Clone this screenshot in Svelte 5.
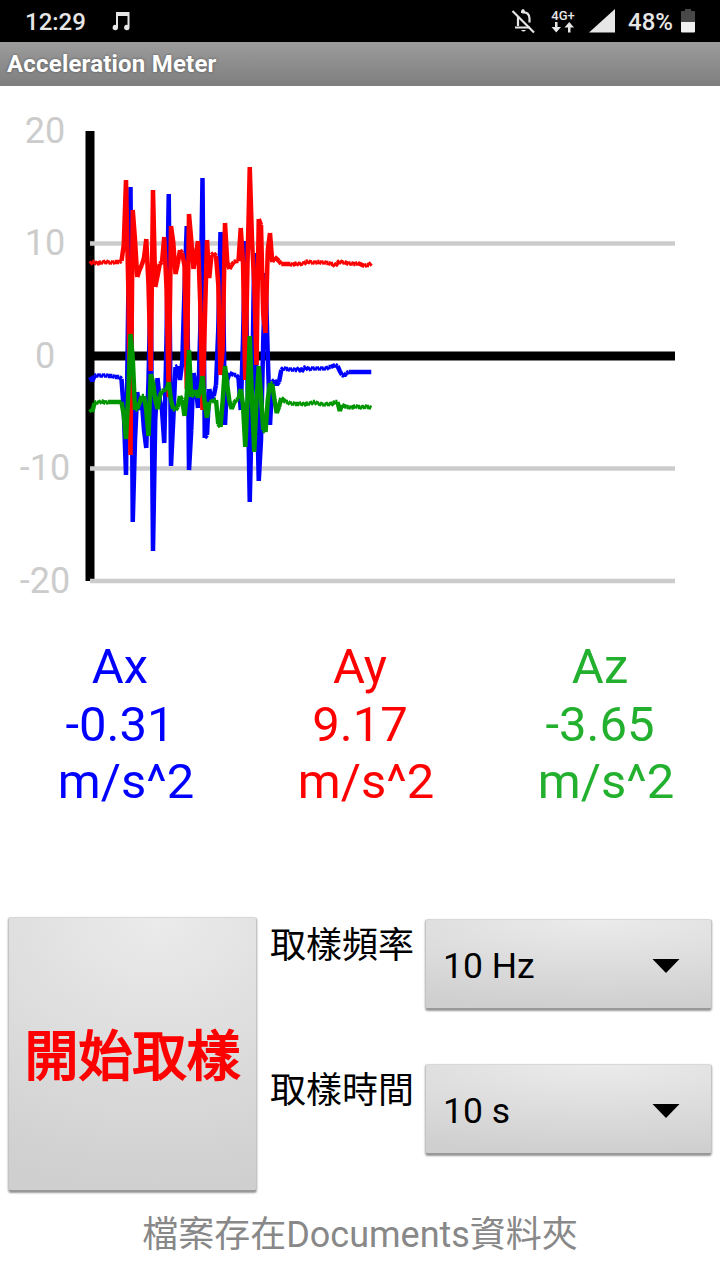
<script>
	// trace heights in plot pixels, one sample every 2.25px
	const traces = [
		{
			color: "#00f",
			samples: [
				377, 381, 376, 375, 376, 375, 376, 375, 376, 376, 376, 377, 377, 377, 379, 410,
				475, 300, 187, 522, 440, 392, 410, 400, 430, 448, 380, 284, 551, 420, 378, 400,
				410, 443, 340, 194, 466, 420, 367, 366, 380, 362, 290, 226, 470, 430, 373, 385,
				408, 330, 178, 438, 435, 389, 399, 396, 385, 330, 232, 260, 425, 380, 373, 374,
				375, 375, 378, 410, 340, 241, 380, 502, 400, 253, 380, 481, 440, 340, 273, 355,
				425, 382, 380, 385, 382, 370, 368, 369, 369, 370, 369, 370, 370, 368, 372, 368,
				367, 370, 368, 369, 368, 369, 368, 369, 368, 369, 367, 367, 366, 365, 366, 371,
				375, 376, 373, 372, 372, 372, 372, 372, 372, 372, 372, 372, 372, 372
			]
		},
		{
			color: "#f00",
			samples: [
				264, 262, 262, 264, 263, 262, 263, 261, 263, 262, 263, 262, 262, 262, 261, 245,
				180, 286, 455, 210, 240, 277, 270, 265, 258, 239, 285, 371, 190, 287, 276, 264,
				262, 237, 288, 397, 226, 242, 274, 264, 250, 253, 266, 389, 214, 240, 269, 255,
				241, 304, 410, 325, 240, 278, 255, 253, 256, 284, 375, 347, 223, 262, 269, 265,
				262, 261, 261, 228, 262, 380, 265, 167, 240, 284, 365, 219, 225, 316, 333, 250,
				233, 262, 257, 259, 261, 264, 264, 264, 264, 264, 265, 264, 263, 265, 263, 264,
				262, 261, 263, 262, 263, 262, 262, 263, 262, 263, 263, 264, 264, 266, 263, 261,
				263, 262, 263, 264, 263, 264, 264, 263, 264, 265, 266, 265, 265, 263
			]
		},
		{
			color: "#009600",
			samples: [
				409, 412, 403, 402, 403, 401, 402, 403, 402, 402, 402, 402, 402, 402, 402, 415,
				439, 395, 334, 358, 410, 409, 403, 396, 396, 410, 436, 374, 382, 400, 409, 396,
				391, 390, 390, 382, 400, 409, 410, 407, 396, 400, 416, 395, 350, 397, 394, 390,
				398, 390, 376, 404, 418, 402, 402, 400, 400, 424, 427, 400, 366, 385, 402, 409,
				403, 400, 399, 389, 405, 447, 400, 336, 400, 452, 400, 366, 395, 430, 432, 400,
				383, 384, 400, 413, 407, 398, 400, 402, 402, 404, 403, 404, 404, 404, 403, 405,
				404, 403, 404, 402, 402, 404, 403, 405, 404, 405, 403, 405, 403, 402, 402, 411,
				405, 406, 407, 407, 408, 407, 406, 407, 407, 408, 406, 407, 407, 408
			]
		}
	];

	const ticks = [20, 10, 0, -10, -20];

	const readings = [
		{ name: "Ax", value: "-0.31", cls: "x" },
		{ name: "Ay", value: "9.17", cls: "y" },
		{ name: "Az", value: "-3.65", cls: "z" }
	];

	const settings = [
		{ label: "取樣頻率", value: "10 Hz" },
		{ label: "取樣時間", value: "10 s" }
	];

	function tickY(tick) {
		return 356 - tick * 11.25;
	}

	// every segment is its own subpath, so the joins stay square
	function toPath(samples) {
		return samples
			.slice(1)
			.map((y, i) => {
				const x = 90 + i * 2.25;
				return `M${x} ${samples[i]}L${x + 2.25} ${y}`;
			})
			.join("");
	}
</script>

<div class="screen">
	<header class="status">
		<span class="clock">12:29</span>
		<svg class="note" width="18" height="19" viewBox="0 0 18 19">
			<path d="M4 0h13.500v15.500a2.700 2.700 0 1 1-2-2.600V4H6v11.500a2.700 2.700 0 1 1-2-2.600z" />
		</svg>
		<svg class="bell" width="24" height="26" viewBox="0 0 24 26">
			<path d="M7 8v10M4 19.500h15M11 4.500c5-1 7.500 2 7.500 6v4" fill="none" stroke="#e6e6e6" stroke-width="2.200" />
			<path d="M10 3q2-4 4 0v2h-4zM10 22h5q-2.500 3-5 0z" />
			<path d="M1.500 3 23 24.500" stroke="#e6e6e6" stroke-width="2.200" />
		</svg>
		<div class="network">
			<span>4G+</span>
			<svg width="24" height="11" viewBox="0 0 24 11">
				<path d="M4 0h2.500v5h3.500L5.250 10.500.500 5H4zM17 10.500h2.500V5.500H23L18.250 0 13.500 5.500H17z" />
			</svg>
		</div>
		<svg class="signal" width="26" height="24" viewBox="0 0 26 24">
			<path d="M26 0v23.500H0z" />
		</svg>
		<span class="percent">48%</span>
		<svg class="battery" width="14" height="24" viewBox="0 0 14 24">
			<path d="M4 0h6v2h3q1 0 1 1v10H0V3q0-1 1-1h3z" fill="#484848" />
			<path d="M0 13h14v9.500q0 1-1 1H1q-1 0-1-1z" fill="#f0f0f0" />
		</svg>
	</header>

	<h1>Acceleration Meter</h1>

	<svg class="chart" width="720" height="540" viewBox="0 86 720 540">
		{#each ticks as tick}
			<text x="45" y={tickY(tick) + 11.5}>{tick}</text>
		{/each}
		<rect x="85.500" y="131" width="9" height="450" />
		{#each ticks.filter((t) => t !== 20 && t !== 0) as tick}
			<line x1="90" x2="675" y1={tickY(tick)} y2={tickY(tick)} stroke="#ccc" stroke-width="4.500" />
		{/each}
		<rect x="90" y="351.500" width="585" height="9" />
		{#each traces as trace}
			<path class="trace" d={toPath(trace.samples)} stroke={trace.color} />
		{/each}
	</svg>

	<section class="readings">
		{#each readings as { name, value, cls }}
			<div class={cls}>
				<div>{name}</div>
				<div>{value}</div>
				<div class="unit">m/s^2</div>
			</div>
		{/each}
	</section>

	<section class="controls">
		<button class="start">開始取樣</button>
		<div class="settings">
			{#each settings as { label, value }}
				<div class="setting">
					<span class="label">{label}</span>
					<button class="spinner">
						{value}
						<svg width="28" height="14" viewBox="0 0 28 14">
							<path d="M0.500 0h27L14 14z" />
						</svg>
					</button>
				</div>
			{/each}
		</div>
	</section>

	<footer>檔案存在Documents資料夾</footer>
</div>

<style>
	:global(body) {
		margin: 0;
		background: #fff;
	}

	.screen {
		width: 720px;
		height: 1280px;
		overflow: hidden;
		display: flex;
		flex-direction: column;
		background: #fff;
		font-family: Roboto, "Noto Sans CJK TC", sans-serif;
	}

	.status {
		display: flex;
		align-items: center;
		flex: none;
		box-sizing: border-box;
		height: 42px;
		padding: 0 25px;
		background: #000;
		color: #e6e6e6;
		fill: #e6e6e6;
		font-size: 24px;
		font-weight: 500;
	}

	.clock {
		width: 87px;
		padding-top: 2px;
	}

	.bell {
		margin-left: auto;
	}

	.network {
		display: flex;
		flex-direction: column;
		align-items: center;
		width: 26px;
		margin: 0 13px 0 15px;
		font-size: 13px;
		line-height: 13px;
	}

	.percent {
		margin: 2px 8px 0 13px;
	}

	h1 {
		flex: none;
		box-sizing: border-box;
		height: 44px;
		margin: 0;
		padding-left: 7px;
		background: linear-gradient(#9c9c9c, #7e7e7e);
		color: #fff;
		font-size: 24px;
		font-weight: 700;
		letter-spacing: 0.2px;
		line-height: 44px;
		text-shadow: 0 0 3px rgba(0, 0, 0, 0.4);
	}

	.chart {
		display: block;
		flex: none;
	}

	.chart text {
		fill: #ccc;
		font-size: 36px;
		text-anchor: middle;
	}

	.trace {
		fill: none;
		stroke-width: 4.5;
	}

	.readings {
		display: grid;
		grid-template-columns: repeat(3, 240px);
		flex: none;
		height: 286px;
		padding-top: 12px;
		box-sizing: border-box;
		font-size: 49px;
		line-height: 57.5px;
		text-align: center;
	}

	.unit {
		padding-left: 12px;
	}

	.x {
		color: #00f;
	}

	.y {
		color: #f00;
	}

	.z {
		color: #22b02e;
	}

	.controls {
		display: flex;
		flex: none;
		gap: 13px;
		padding: 5px 8px 0;
	}

	button {
		border: 1px solid #c4c4c4;
		border-top-color: #d8d8d8;
		border-bottom: 2px solid #999;
		border-radius: 3px;
		background: radial-gradient(ellipse 140% 100% at 60% 0, #ebebeb, #cfcfcf);
		box-shadow: 0 1px 2px rgba(0, 0, 0, 0.4);
		font-family: inherit;
		box-sizing: border-box;
	}

	.start {
		width: 249px;
		height: 275px;
		padding: 0 0 4px;
		color: #f00;
		font-size: 54px;
		-webkit-text-stroke: 1.8px #f00;
	}

	.settings {
		display: flex;
		flex-direction: column;
		gap: 54px;
		padding-top: 2px;
	}

	.setting {
		display: flex;
		height: 91px;
	}

	.label {
		width: 155px;
		font-size: 36px;
		line-height: 54px;
	}

	.spinner {
		display: flex;
		align-items: center;
		justify-content: space-between;
		width: 287px;
		padding: 4px 31px 0 17px;
		color: #000;
		font-size: 35.5px;
	}

	footer {
		margin-top: 16px;
		color: #888;
		font-size: 36px;
		line-height: 54px;
		text-align: center;
	}
</style>
